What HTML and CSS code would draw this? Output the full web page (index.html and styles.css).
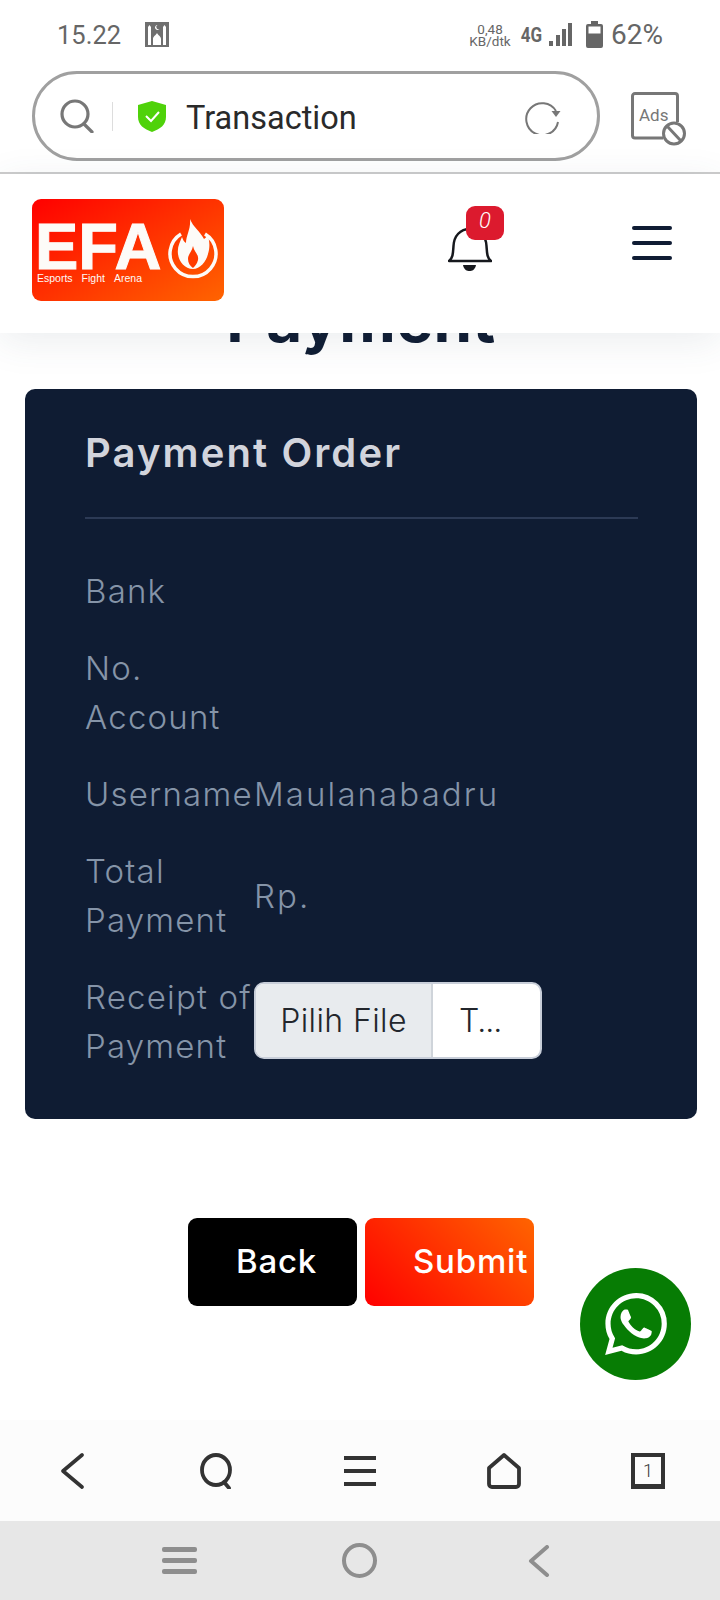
FILE: index.html
```html
<!DOCTYPE html>
<html lang="en">
<head>
  <meta charset="UTF-8">
  <title>Transaction</title>
  <link rel="stylesheet" href="styles.css">
</head>
<body>
  <div class="status-bar">
    <span class="clock">15.22</span>
    <svg class="mosque" viewBox="0 0 24 25">
      <rect width="24" height="25" fill="#6f6f6f"/>
      <path d="M3 23V5l1.500-2L6 5v18zM18 23V5l1.500-2L21 5v18zM8 23v-6c0-3 3-3.500 4-6 1 2.500 4 3 4 6v6z" fill="#fff"/>
      <path d="M12.500 3a2.500 2.500 0 1 0 2 4 2 2 0 1 1-2-4z" fill="#fff"/>
    </svg>
    <span class="status-right">
      <span class="speed"><span>0,48</span><span>KB/dtk</span></span>
      <span class="net">4G</span>
      <svg class="signal" viewBox="0 0 24 24">
        <rect x="0" y="18" width="4" height="5" fill="#666"/>
        <rect x="7" y="12" width="4" height="11" fill="#666"/>
        <rect x="13" y="6" width="4" height="17" fill="#666"/>
        <rect x="19" y="0" width="4" height="23" fill="#666"/>
      </svg>
      <svg class="battery" viewBox="0 0 17 27">
        <path d="M5 0h7v3h3a2 2 0 0 1 2 2v20a2 2 0 0 1-2 2H2a2 2 0 0 1-2-2V5a2 2 0 0 1 2-2h3z" fill="#666"/>
        <rect x="2.500" y="5.500" width="12" height="7" fill="#fff"/>
      </svg>
      <span class="percent">62%</span>
    </span>
  </div>

  <div class="browser-bar">
    <div class="url-box">
      <svg class="url-search" viewBox="0 0 34 34" fill="none" stroke="#777" stroke-width="3.200">
        <circle cx="15" cy="15" r="13"/>
        <path d="M24 25l8 8" stroke-linecap="round"/>
      </svg>
      <span class="url-divider"></span>
      <svg class="shield" viewBox="0 0 28 31">
        <path d="M14 0l14 4v12c0 8-6 12-14 15C6 28 0 24 0 16V4z" fill="#4fd20a"/>
        <path d="M8 15l5 5 8-9" fill="none" stroke="#fff" stroke-width="2"/>
      </svg>
      <span class="url-text">Transaction</span>
      <svg class="reload" viewBox="0 0 36 36" fill="none" stroke="#777" stroke-width="2">
        <path d="M33 24A16 16 0 1 1 31 13"/>
        <path d="M26.500 13h9l-4.500 6z" fill="#777" stroke="none"/>
      </svg>
    </div>
    <svg class="ads" viewBox="0 0 56 54">
      <path d="M32 46H4a2.500 2.500 0 0 1-2.500-2.500V4A2.500 2.500 0 0 1 4 1.500h40A2.500 2.500 0 0 1 46.500 4v26" fill="none" stroke="#777" stroke-width="3"/>
      <text x="8" y="29" font-family="Roboto" font-size="17" fill="#777">Ads</text>
      <circle cx="43" cy="41.500" r="10.500" fill="#fff" stroke="#777" stroke-width="3"/>
      <path d="M36 34l14 15" stroke="#777" stroke-width="3"/>
    </svg>
  </div>

  <header class="site-header">
    <div class="logo">
      <div class="logo-words">
        <span class="logo-name">EFA</span>
        <span class="logo-sub"><span>Esports</span><span>Fight</span><span>Arena</span></span>
      </div>
      <svg class="logo-fire" viewBox="0 0 50 60" fill="none">
        <path d="M13 15a23 23 0 1 0 24 0" stroke="#fdfbf8" stroke-width="3.500"/>
        <path d="M22 0c3 8 10 12 14 20 2-1 3-3 3-5 3 6 3 14 1 20-2 8-8 15-15 15-8 0-14-7-15-15-1-7 2-12 4-17 1 3 2 5 4 6 0-8 5-14 4-24z" fill="#fdfbf8"/>
        <path d="M25 27c1 6 6 8 5 14-1 4-3 6-5 8-3-2-5-5-5-9 0-5 4-7 5-13z" fill="#ff3c00"/>
      </svg>
    </div>
    <div class="header-right">
      <div class="bell-wrap">
        <svg class="bell" viewBox="0 0 44 48" fill="none" stroke="#16181d" stroke-width="2.500">
          <path d="M1 37c4-3 4-8 4.500-15C6 12 12 5 22 5s16 7 16.500 17c.5 7 .5 12 4.500 15z" stroke-linejoin="round"/>
          <path d="M15 41h13c-1 5-4 6-6.500 6S16 46 15 41z" fill="#16181d" stroke="none"/>
        </svg>
        <span class="badge">0</span>
      </div>
      <div class="burger"><span></span><span></span><span></span></div>
    </div>
  </header>

  <main class="page">
    <h1 class="page-title">Payment</h1>

    <section class="card">
      <h2 class="card-title">Payment Order</h2>
      <div class="rows">
        <div class="row"><span class="label">Bank</span><span class="value"></span></div>
        <div class="row"><span class="label">No.<br>Account</span><span class="value"></span></div>
        <div class="row"><span class="label">Username</span><span class="value">Maulanabadru</span></div>
        <div class="row"><span class="label">Total<br>Payment</span><span class="value">Rp.</span></div>
        <div class="row">
          <span class="label">Receipt of<br>Payment</span>
          <div class="file-input">
            <span class="file-btn">Pilih File</span>
            <span class="file-name">T...</span>
          </div>
        </div>
      </div>
    </section>

    <div class="actions">
      <a class="btn btn-back">Back</a>
      <a class="btn btn-submit">Submit</a>
    </div>

    <a class="whatsapp">
      <svg viewBox="0 0 24 24" fill="#fff">
        <path d="M17.472 14.382c-.297-.149-1.758-.867-2.03-.967-.273-.099-.471-.148-.67.15-.197.297-.767.966-.94 1.164-.173.199-.347.223-.644.075-.297-.15-1.255-.463-2.39-1.475-.883-.788-1.48-1.761-1.653-2.059-.173-.297-.018-.458.13-.606.134-.133.298-.347.446-.52.149-.174.198-.298.298-.497.099-.198.05-.371-.025-.52-.075-.149-.669-1.612-.916-2.207-.242-.579-.487-.5-.669-.51-.173-.008-.371-.01-.57-.01-.198 0-.52.074-.792.372-.272.297-1.04 1.016-1.04 2.479 0 1.462 1.065 2.875 1.213 3.074.149.198 2.096 3.2 5.077 4.487.709.306 1.262.489 1.694.625.712.227 1.36.195 1.871.118.571-.085 1.758-.719 2.006-1.413.248-.694.248-1.289.173-1.413-.074-.124-.272-.198-.57-.347m-5.421 7.403h-.004a9.87 9.87 0 01-5.031-1.378l-.361-.214-3.741.982.998-3.648-.235-.374a9.86 9.86 0 01-1.51-5.26c.001-5.45 4.436-9.884 9.888-9.884 2.64 0 5.122 1.03 6.988 2.898a9.825 9.825 0 012.893 6.994c-.003 5.45-4.437 9.884-9.885 9.884m8.413-18.297A11.815 11.815 0 0012.05 0C5.495 0 .16 5.335.157 11.892c0 2.096.547 4.142 1.588 5.945L.057 24l6.305-1.654a11.882 11.882 0 005.683 1.448h.005c6.554 0 11.89-5.335 11.893-11.893a11.821 11.821 0 00-3.48-8.413z"/>
      </svg>
    </a>
  </main>

  <div class="toolbar">
    <svg class="tool" viewBox="0 0 34 36" fill="none" stroke="#333" stroke-width="3.600">
      <path d="M27 2L8 18l19 16" stroke-linecap="round" stroke-linejoin="round"/>
    </svg>
    <svg class="tool" viewBox="0 0 34 36" fill="none" stroke="#333" stroke-width="3.800">
      <ellipse cx="17" cy="17" rx="14" ry="15"/>
      <path d="M25 29l5 6" stroke-linecap="round"/>
    </svg>
    <svg class="tool" viewBox="0 0 34 36" fill="#333">
      <rect x="1" y="3" width="32" height="4"/>
      <rect x="1" y="16" width="32" height="4"/>
      <rect x="1" y="29" width="32" height="4"/>
    </svg>
    <svg class="tool" viewBox="0 0 34 36" fill="none" stroke="#333" stroke-width="3.800">
      <path d="M17 2L2 15v16a3 3 0 0 0 3 3h24a3 3 0 0 0 3-3V15z" stroke-linejoin="round"/>
    </svg>
    <div class="tab-count">1</div>
  </div>

  <div class="nav-bar">
    <div class="nav-menu"><span></span><span></span><span></span></div>
    <span class="nav-home"></span>
    <svg class="nav-back" viewBox="0 0 22 32" fill="none" stroke="#8e8e8e" stroke-width="4">
      <path d="M19 2L3 16l16 14" stroke-linecap="round" stroke-linejoin="round"/>
    </svg>
  </div>
</body>
</html>
```

FILE: styles.css
```css
* {
  box-sizing: border-box;
}

html, body {
  margin: 0;
  padding: 0;
}

body {
  width: 720px;
  height: 1600px;
  overflow: hidden;
  display: flex;
  flex-direction: column;
  background: #fff;
  font-family: Inter, Roboto, sans-serif;
}

/* phone status bar */
.status-bar {
  height: 71px;
  padding: 0 57px 2px;
  display: flex;
  align-items: center;
  color: #666;
  font-family: Roboto, sans-serif;
}

.clock {
  font-size: 25.500px;
  width: 88px;
}

.mosque {
  width: 24px;
  height: 25px;
}

.status-right {
  margin-left: auto;
  display: flex;
  align-items: center;
}

.speed {
  display: flex;
  flex-direction: column;
  align-items: center;
  font-size: 13.500px;
  line-height: 12px;
  width: 40px;
}

.net {
  font-size: 20px;
  font-weight: 700;
  margin-left: 9px;
  transform: scaleX(0.85);
  width: 23px;
}

.signal {
  width: 24px;
  height: 24px;
  margin-left: 7px;
}

.battery {
  width: 17px;
  height: 27px;
  margin-left: 13px;
}

.percent {
  font-size: 28px;
  margin-left: 8px;
}

/* browser address bar */
.browser-bar {
  height: 103px;
  padding-left: 32px;
  display: flex;
  align-items: flex-start;
  border-bottom: 2px solid #ccc;
}

.url-box {
  width: 568px;
  height: 90px;
  border: 3px solid #a0a0a0;
  border-radius: 45px;
  display: flex;
  align-items: center;
  padding-left: 25px;
}

.url-search {
  width: 34px;
  height: 34px;
}

.url-divider {
  width: 1px;
  height: 29px;
  background: #ddd;
  margin-left: 18px;
}

.shield {
  width: 28px;
  height: 31px;
  margin-left: 25px;
}

.url-text {
  font-family: Roboto, sans-serif;
  font-size: 32.500px;
  color: #2a2a2a;
  margin-left: 20px;
  padding-top: 3px;
}

.reload {
  width: 36px;
  height: 36px;
  margin-left: auto;
  margin-right: 36px;
}

.ads {
  width: 56px;
  height: 54px;
  margin: 21px 0 0 31px;
}

/* site header */
.site-header {
  height: 159px;
  background: #fff;
  padding: 25px 48px 0 32px;
  display: flex;
  justify-content: space-between;
  box-shadow: 0 8px 36px rgba(60, 80, 100, 0.10);
  position: relative;
  z-index: 2;
}

.logo {
  width: 192px;
  height: 102px;
  border-radius: 9px;
  background: linear-gradient(150deg, #ff0000, #ff6400);
  display: flex;
  color: #fdfbf8;
  padding: 23px 0 0 3px;
}

.logo-words {
  width: 133px;
  font-family: "Liberation Sans", Arial, sans-serif;
  display: flex;
  flex-direction: column;
}

.logo-name {
  font-size: 65px;
  font-weight: 700;
  line-height: 49px;
  -webkit-text-stroke: 1px #fdfbf8;
}

.logo-sub {
  display: flex;
  font-size: 10.500px;
  line-height: 14px;
  gap: 9px;
  margin-top: 0;
  margin-left: 2px;
}

.logo-fire {
  width: 50px;
  height: 60px;
  margin: -3px 0 0 0;
}

.header-right {
  display: flex;
  padding-top: 3px;
}

.bell-wrap {
  position: relative;
  width: 44px;
  height: 48px;
  margin-top: 22px;
  margin-right: 140px;
}

.bell {
  width: 44px;
  height: 48px;
  display: block;
}

.badge {
  position: absolute;
  left: 18px;
  top: -18px;
  width: 38px;
  height: 34px;
  border-radius: 9px;
  background: #dc1a2e;
  color: #fff;
  font-family: Roboto, sans-serif;
  font-style: italic;
  font-weight: 300;
  font-size: 22px;
  line-height: 30px;
  text-align: center;
}

.burger {
  width: 40px;
  display: flex;
  flex-direction: column;
  gap: 11px;
  padding-top: 24px;
}

.burger span {
  height: 4px;
  border-radius: 2px;
  background: #0f1c33;
}

/* page content */
.page {
  flex: 1;
  position: relative;
  overflow: hidden;
  padding: 0 23px 0 25px;
}

.page-title {
  margin: -47px 0 0;
  text-align: center;
  font-size: 62px;
  line-height: 68px;
  letter-spacing: 0.4px;
  font-weight: 700;
  color: #0f1c33;
}

.card {
  margin-top: 35px;
  height: 730px;
  background: #0f1c33;
  border-radius: 10px;
  padding: 38px 59px 0 60px;
}

.card-title {
  margin: 0;
  height: 92px;
  border-bottom: 2px solid #2c3a55;
  color: #d2d4dc;
  font-size: 40px;
  line-height: 52px;
  letter-spacing: 2.100px;
  font-weight: 600;
}

.rows {
  display: flex;
  flex-direction: column;
  gap: 28px;
  padding-top: 48px;
}

.row {
  display: flex;
  align-items: center;
  font-size: 33px;
  line-height: 49px;
  letter-spacing: 1.200px;
  font-weight: 300;
  color: #8594a8;
}

.label {
  width: 169px;
  flex-shrink: 0;
  white-space: nowrap;
}

.value {
  min-height: 49px;
  letter-spacing: 2.100px;
}

.file-input {
  width: 288px;
  height: 77px;
  margin-top: -4px;
  display: flex;
  border: 2px solid #c8ced9;
  border-radius: 10px;
  overflow: hidden;
  background: #fff;
  color: #22262c;
  font-size: 32px;
  letter-spacing: 0.400px;
  line-height: 73px;
}

.file-btn {
  width: 177px;
  background: #e8ebee;
  border-right: 2px solid #cfd4da;
  text-align: center;
}

.file-name {
  padding-left: 26px;
  letter-spacing: -1px;
}

/* back and submit */
.actions {
  margin-top: 99px;
  padding-left: 163px;
  display: flex;
  gap: 8px;
}

.btn {
  width: 169px;
  height: 88px;
  border-radius: 9px;
  color: #fff;
  font-size: 33px;
  font-weight: 500;
  letter-spacing: 0.800px;
  line-height: 86px;
  white-space: nowrap;
  overflow: hidden;
}

.btn-back {
  background: #000;
  padding-left: 48px;
}

.btn-submit {
  background: linear-gradient(45deg, #ff0000, #ff6400);
  padding-left: 48px;
}

.whatsapp {
  position: absolute;
  left: 580px;
  top: 935px;
  width: 111px;
  height: 112px;
  border-radius: 50%;
  background: #077c04;
  display: flex;
  align-items: center;
  justify-content: center;
}

.whatsapp svg {
  width: 62px;
  height: 62px;
}

/* browser toolbar */
.toolbar {
  height: 101px;
  background: #fcfcfc;
  display: flex;
  align-items: center;
  justify-content: space-between;
  padding: 0 55px 0 55px;
}

.tool {
  width: 34px;
  height: 36px;
}

.tab-count {
  width: 34px;
  height: 36px;
  border: 4px solid #333;
  border-bottom-width: 5px;
  color: #333;
  font-family: Roboto, sans-serif;
  font-weight: 300;
  font-size: 18px;
  line-height: 27px;
  text-align: center;
}

/* phone nav bar */
.nav-bar {
  height: 79px;
  background: #e7e7e7;
  display: flex;
  align-items: center;
  padding: 0 0 0 162px;
}

.nav-menu {
  width: 35px;
  display: flex;
  flex-direction: column;
  gap: 6px;
}

.nav-menu span {
  height: 5px;
  border-radius: 2px;
  background: #8e8e8e;
}

.nav-home {
  width: 35px;
  height: 35px;
  border: 4px solid #8e8e8e;
  border-radius: 50%;
  margin-left: 145px;
}

.nav-back {
  width: 22px;
  height: 32px;
  margin-left: 151px;
}
```
